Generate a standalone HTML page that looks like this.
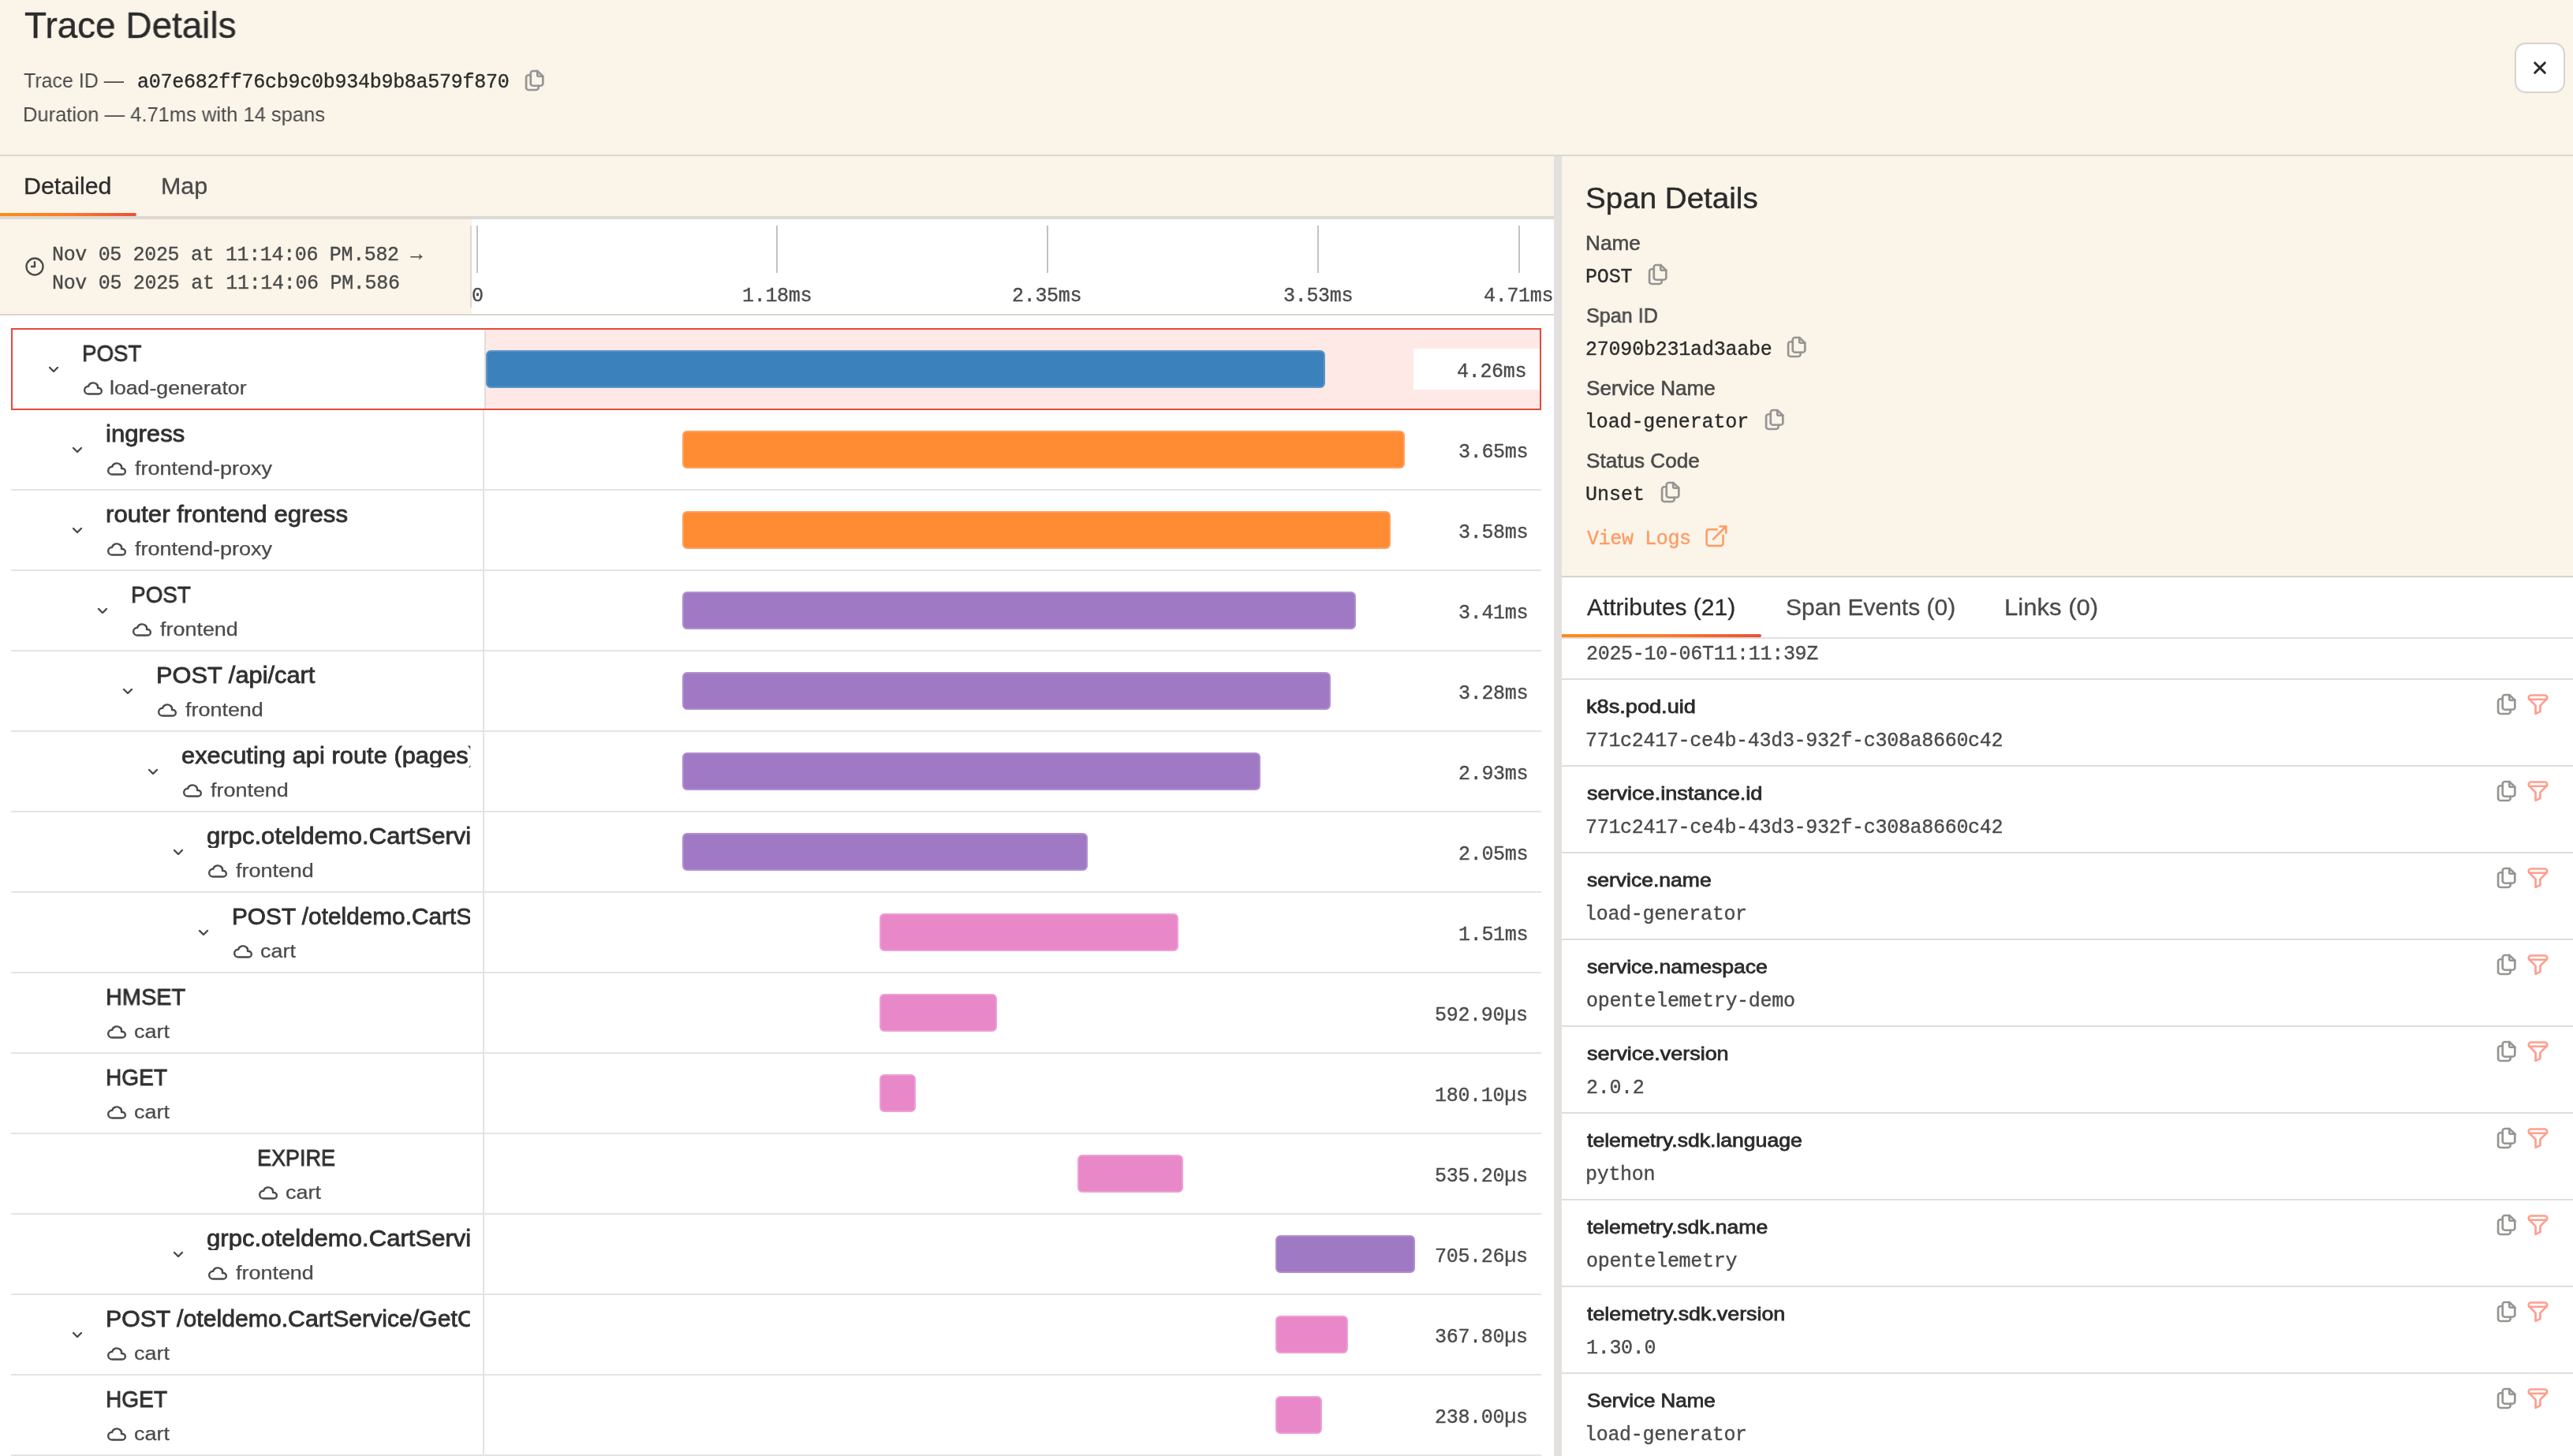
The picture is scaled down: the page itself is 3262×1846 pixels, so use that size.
<!DOCTYPE html>
<html><head><meta charset="utf-8"><title>Trace Details</title>
<style>
html,body{margin:0;padding:0;}
body{width:3262px;height:1846px;position:relative;overflow:hidden;background:#fff;font-family:"Liberation Sans",sans-serif;font-kerning:none;}
body>div,body>svg{position:absolute;}
.t{white-space:pre;transform-origin:0 0;will-change:transform;}
</style></head><body>
<div style="left:0px;top:0px;width:3262px;height:196px;background:#faf4e9;"></div>
<div style="left:0px;top:196px;width:3262px;height:2px;background:#dbd8d0;"></div>
<div style="left:0px;top:198px;width:1970px;height:76px;background:#faf4e9;"></div>
<div style="left:0px;top:274px;width:1970px;height:4px;background:#dcd9d2;"></div>
<div style="left:0;top:270px;width:172.5px;height:4px;background:linear-gradient(90deg,#ff8c1a 0%,#fb7d28 50%,#e8503a 100%);border-radius:0 2px 2px 0"></div>
<div style="left:0px;top:278px;width:598px;height:120px;background:#faf4e9;"></div>
<div style="left:598px;top:278px;width:1372px;height:120px;background:#fff;"></div>
<div style="left:596px;top:286px;width:2px;height:104px;background:#dcd8d0;"></div>
<div style="left:0px;top:398px;width:1970px;height:2px;background:#dad6cd;"></div>
<div style="left:0px;top:400px;width:1970px;height:1446px;background:#fff;"></div>
<div style="left:1970px;top:198px;width:10px;height:1648px;background:#e2e1df;"></div>
<div style="left:1980px;top:198px;width:1282px;height:532px;background:#faf4e9;"></div>
<div style="left:1980px;top:730px;width:1282px;height:2px;background:#d8d4cb;"></div>
<div style="left:1980px;top:732px;width:1282px;height:1114px;background:#fff;"></div>
<div class="t" style="left:31.17px;top:9.00px;font:400 46px/46px 'Liberation Sans', sans-serif;color:#2b2b2b;transform:scaleX(0.9975);-webkit-text-stroke:0.4px #2b2b2b;">Trace Details</div>
<div class="t" style="left:30.44px;top:88.60px;font:400 26px/26px 'Liberation Sans', sans-serif;color:#4a4a4a;transform:scaleX(0.9598);">Trace ID —</div>
<div class="t" style="left:173.61px;top:91.50px;font:400 25px/25px 'Liberation Mono', monospace;color:#2b2b2b;letter-spacing:-0.269px;-webkit-text-stroke:0.35px #2b2b2b;">a07e682ff76cb9c0b934b9b8a579f870</div>
<svg style="left:660.22px;top:85.53px" width="34" height="32" viewBox="0 0 24 24" preserveAspectRatio="none" fill="none" stroke="#969592" stroke-width="1.9" stroke-linecap="round" stroke-linejoin="round"><path d="M15 3v4a1 1 0 0 0 1 1h4"/><path d="M18 17h-7a2 2 0 0 1 -2 -2v-10a2 2 0 0 1 2 -2h4l5 5v7a2 2 0 0 1 -2 2z"/><path d="M16 17v2a2 2 0 0 1 -2 2h-7a2 2 0 0 1 -2 -2v-10a2 2 0 0 1 2 -2h2"/></svg>
<div class="t" style="left:28.91px;top:132.00px;font:400 26px/26px 'Liberation Sans', sans-serif;color:#4a4a4a;transform:scaleX(0.9816);">Duration — 4.71ms with 14 spans</div>
<div style="left:3188px;top:54px;width:64px;height:64px;box-sizing:border-box;background:#fff;border:2px solid #d6d3cc;border-radius:14px"></div>
<svg style="left:3208px;top:74px" width="24" height="24" viewBox="0 0 24 24" fill="none" stroke="#2b2b2b" stroke-width="3" stroke-linecap="round"><path d="M5.7 5.7l12.6 12.6M18.3 5.7l-12.6 12.6"/></svg>
<div class="t" style="left:29.57px;top:221.50px;font:400 28.6px/29px 'Liberation Sans', sans-serif;color:#2b2b2b;transform:scaleX(1.0619);-webkit-text-stroke:0.3px #2b2b2b;">Detailed</div>
<div class="t" style="left:204.36px;top:221.50px;font:400 28.6px/29px 'Liberation Sans', sans-serif;color:#4a4a4a;transform:scaleX(1.0651);-webkit-text-stroke:0.3px #4a4a4a;">Map</div>
<svg style="left:30.10px;top:323.90px" width="28" height="28" viewBox="0 0 24 24" fill="none" stroke="#4a4a4a" stroke-width="2" stroke-linecap="round" stroke-linejoin="round"><path d="M3 12a9 9 0 1 0 18 0a9 9 0 0 0 -18 0"/><path d="M12 12h-3.5"/><path d="M12 7v5"/></svg>
<div class="t" style="left:65.50px;top:311.00px;font:400 25px/25px 'Liberation Mono', monospace;color:#4a4a4a;letter-spacing:-0.343px;-webkit-text-stroke:0.35px #4a4a4a;">Nov 05 2025 at 11:14:06 PM.582 →</div>
<div class="t" style="left:65.50px;top:346.80px;font:400 25px/25px 'Liberation Mono', monospace;color:#4a4a4a;letter-spacing:-0.315px;-webkit-text-stroke:0.35px #4a4a4a;">Nov 05 2025 at 11:14:06 PM.586</div>
<div style="left:604px;top:286px;width:2px;height:60px;background:#c2c2c2;"></div>
<div style="left:984.3px;top:286px;width:2px;height:60px;background:#c2c2c2;"></div>
<div style="left:1327px;top:286px;width:2px;height:60px;background:#c2c2c2;"></div>
<div style="left:1670px;top:286px;width:2px;height:60px;background:#c2c2c2;"></div>
<div style="left:1925px;top:286px;width:2px;height:60px;background:#c2c2c2;"></div>
<div class="t" style="left:598.16px;top:363.00px;font:400 25px/25px 'Liberation Mono', monospace;color:#4a4a4a;-webkit-text-stroke:0.35px #4a4a4a;">0</div>
<div class="t" style="left:941.08px;top:363.00px;font:400 25px/25px 'Liberation Mono', monospace;color:#4a4a4a;letter-spacing:-0.302px;-webkit-text-stroke:0.35px #4a4a4a;">1.18ms</div>
<div class="t" style="left:1283.40px;top:363.00px;font:400 25px/25px 'Liberation Mono', monospace;color:#4a4a4a;letter-spacing:-0.302px;-webkit-text-stroke:0.35px #4a4a4a;">2.35ms</div>
<div class="t" style="left:1626.50px;top:363.00px;font:400 25px/25px 'Liberation Mono', monospace;color:#4a4a4a;letter-spacing:-0.302px;-webkit-text-stroke:0.35px #4a4a4a;">3.53ms</div>
<div class="t" style="left:1881.39px;top:363.00px;font:400 25px/25px 'Liberation Mono', monospace;color:#4a4a4a;letter-spacing:-0.302px;-webkit-text-stroke:0.35px #4a4a4a;">4.71ms</div>
<div style="left:616px;top:418px;width:1336px;height:100px;background:#fee9e7;"></div>
<div style="left:614px;top:418px;width:2px;height:100px;background:#e0dedd;"></div>
<div style="left:14px;top:416px;width:1940px;height:104px;box-sizing:border-box;border:2px solid #e5493b"></div>
<div style="left:1792px;top:442px;width:160px;height:52px;background:#fff;"></div>
<div class="t" style="left:104.00px;top:432.50px;font:400 29.5px/30px 'Liberation Sans', sans-serif;color:#303030;transform:scaleX(0.9395);-webkit-text-stroke:0.8px #303030;">POST</div>
<svg style="left:105.12px;top:479.77px" width="26" height="26" viewBox="0 0 24 24" fill="none" stroke="#4a4a4a" stroke-width="2.2" stroke-linecap="round" stroke-linejoin="round"><path d="M6.657 18c-2.572 0 -4.657 -2.007 -4.657 -4.483c0 -2.475 2.085 -4.482 4.657 -4.482c.393 -1.762 1.794 -3.2 3.675 -3.773c1.88 -.572 3.956 -.193 5.444 1c1.488 1.19 2.162 3.007 1.77 4.769h.99c1.913 0 3.464 1.56 3.464 3.486c0 1.927 -1.551 3.487 -3.465 3.487h-11.878"/></svg>
<div class="t" style="left:139.34px;top:480.00px;font:400 23.5px/24px 'Liberation Sans', sans-serif;color:#4a4a4a;transform:scaleX(1.1354);-webkit-text-stroke:0.25px #4a4a4a;">load-generator</div>
<svg style="left:60.10px;top:462.50px" width="16" height="11" viewBox="0 0 16 11" fill="none" stroke="#4a4a4a" stroke-width="2.4" stroke-linecap="round" stroke-linejoin="round"><path d="M3 3l5 5l5 -5"/></svg>
<div style="left:616px;top:444px;width:1064.0px;height:48px;box-sizing:border-box;background:#3b82bd;border:2px solid #5a96c8;border-radius:6px"></div>
<div class="t" style="left:1846.89px;top:458.80px;font:400 25px/25px 'Liberation Mono', monospace;color:#4a4a4a;letter-spacing:-0.302px;-webkit-text-stroke:0.35px #4a4a4a;">4.26ms</div>
<div style="left:14px;top:620px;width:1940px;height:2px;background:#e4e4e4;"></div>
<div style="left:612px;top:520px;width:2px;height:102px;background:#e2e2e2;"></div>
<div class="t" style="left:134.04px;top:534.50px;font:400 29.5px/30px 'Liberation Sans', sans-serif;color:#303030;transform:scaleX(1.0543);-webkit-text-stroke:0.8px #303030;">ingress</div>
<svg style="left:135.12px;top:581.77px" width="26" height="26" viewBox="0 0 24 24" fill="none" stroke="#4a4a4a" stroke-width="2.2" stroke-linecap="round" stroke-linejoin="round"><path d="M6.657 18c-2.572 0 -4.657 -2.007 -4.657 -4.483c0 -2.475 2.085 -4.482 4.657 -4.482c.393 -1.762 1.794 -3.2 3.675 -3.773c1.88 -.572 3.956 -.193 5.444 1c1.488 1.19 2.162 3.007 1.77 4.769h.99c1.913 0 3.464 1.56 3.464 3.486c0 1.927 -1.551 3.487 -3.465 3.487h-11.878"/></svg>
<div class="t" style="left:170.76px;top:582.00px;font:400 23.5px/24px 'Liberation Sans', sans-serif;color:#4a4a4a;transform:scaleX(1.1480);-webkit-text-stroke:0.25px #4a4a4a;">frontend-proxy</div>
<svg style="left:90.10px;top:564.50px" width="16" height="11" viewBox="0 0 16 11" fill="none" stroke="#4a4a4a" stroke-width="2.4" stroke-linecap="round" stroke-linejoin="round"><path d="M3 3l5 5l5 -5"/></svg>
<div style="left:865px;top:546px;width:916.0px;height:48px;box-sizing:border-box;background:#ff8b33;border:2px solid #ffa05c;border-radius:6px"></div>
<div class="t" style="left:1848.89px;top:560.80px;font:400 25px/25px 'Liberation Mono', monospace;color:#4a4a4a;letter-spacing:-0.302px;-webkit-text-stroke:0.35px #4a4a4a;">3.65ms</div>
<div style="left:14px;top:722px;width:1940px;height:2px;background:#e4e4e4;"></div>
<div style="left:612px;top:622px;width:2px;height:102px;background:#e2e2e2;"></div>
<div class="t" style="left:133.85px;top:636.50px;font:400 29.5px/30px 'Liberation Sans', sans-serif;color:#303030;transform:scaleX(1.0579);-webkit-text-stroke:0.8px #303030;">router frontend egress</div>
<svg style="left:135.12px;top:683.77px" width="26" height="26" viewBox="0 0 24 24" fill="none" stroke="#4a4a4a" stroke-width="2.2" stroke-linecap="round" stroke-linejoin="round"><path d="M6.657 18c-2.572 0 -4.657 -2.007 -4.657 -4.483c0 -2.475 2.085 -4.482 4.657 -4.482c.393 -1.762 1.794 -3.2 3.675 -3.773c1.88 -.572 3.956 -.193 5.444 1c1.488 1.19 2.162 3.007 1.77 4.769h.99c1.913 0 3.464 1.56 3.464 3.486c0 1.927 -1.551 3.487 -3.465 3.487h-11.878"/></svg>
<div class="t" style="left:170.76px;top:684.00px;font:400 23.5px/24px 'Liberation Sans', sans-serif;color:#4a4a4a;transform:scaleX(1.1480);-webkit-text-stroke:0.25px #4a4a4a;">frontend-proxy</div>
<svg style="left:90.10px;top:666.50px" width="16" height="11" viewBox="0 0 16 11" fill="none" stroke="#4a4a4a" stroke-width="2.4" stroke-linecap="round" stroke-linejoin="round"><path d="M3 3l5 5l5 -5"/></svg>
<div style="left:865px;top:648px;width:897.5px;height:48px;box-sizing:border-box;background:#ff8b33;border:2px solid #ffa05c;border-radius:6px"></div>
<div class="t" style="left:1848.89px;top:662.80px;font:400 25px/25px 'Liberation Mono', monospace;color:#4a4a4a;letter-spacing:-0.302px;-webkit-text-stroke:0.35px #4a4a4a;">3.58ms</div>
<div style="left:14px;top:824px;width:1940px;height:2px;background:#e4e4e4;"></div>
<div style="left:612px;top:724px;width:2px;height:102px;background:#e2e2e2;"></div>
<div class="t" style="left:165.99px;top:738.50px;font:400 29.5px/30px 'Liberation Sans', sans-serif;color:#303030;transform:scaleX(0.9459);-webkit-text-stroke:0.8px #303030;">POST</div>
<svg style="left:167.12px;top:785.77px" width="26" height="26" viewBox="0 0 24 24" fill="none" stroke="#4a4a4a" stroke-width="2.2" stroke-linecap="round" stroke-linejoin="round"><path d="M6.657 18c-2.572 0 -4.657 -2.007 -4.657 -4.483c0 -2.475 2.085 -4.482 4.657 -4.482c.393 -1.762 1.794 -3.2 3.675 -3.773c1.88 -.572 3.956 -.193 5.444 1c1.488 1.19 2.162 3.007 1.77 4.769h.99c1.913 0 3.464 1.56 3.464 3.486c0 1.927 -1.551 3.487 -3.465 3.487h-11.878"/></svg>
<div class="t" style="left:202.76px;top:786.00px;font:400 23.5px/24px 'Liberation Sans', sans-serif;color:#4a4a4a;transform:scaleX(1.1461);-webkit-text-stroke:0.25px #4a4a4a;">frontend</div>
<svg style="left:122.10px;top:768.50px" width="16" height="11" viewBox="0 0 16 11" fill="none" stroke="#4a4a4a" stroke-width="2.4" stroke-linecap="round" stroke-linejoin="round"><path d="M3 3l5 5l5 -5"/></svg>
<div style="left:865px;top:750px;width:853.8px;height:48px;box-sizing:border-box;background:#a079c4;border:2px solid #b190d0;border-radius:6px"></div>
<div class="t" style="left:1848.89px;top:764.80px;font:400 25px/25px 'Liberation Mono', monospace;color:#4a4a4a;letter-spacing:-0.302px;-webkit-text-stroke:0.35px #4a4a4a;">3.41ms</div>
<div style="left:14px;top:926px;width:1940px;height:2px;background:#e4e4e4;"></div>
<div style="left:612px;top:826px;width:2px;height:102px;background:#e2e2e2;"></div>
<div class="t" style="left:197.79px;top:840.50px;font:400 29.5px/30px 'Liberation Sans', sans-serif;color:#303030;transform:scaleX(1.0438);-webkit-text-stroke:0.8px #303030;">POST /api/cart</div>
<svg style="left:199.12px;top:887.77px" width="26" height="26" viewBox="0 0 24 24" fill="none" stroke="#4a4a4a" stroke-width="2.2" stroke-linecap="round" stroke-linejoin="round"><path d="M6.657 18c-2.572 0 -4.657 -2.007 -4.657 -4.483c0 -2.475 2.085 -4.482 4.657 -4.482c.393 -1.762 1.794 -3.2 3.675 -3.773c1.88 -.572 3.956 -.193 5.444 1c1.488 1.19 2.162 3.007 1.77 4.769h.99c1.913 0 3.464 1.56 3.464 3.486c0 1.927 -1.551 3.487 -3.465 3.487h-11.878"/></svg>
<div class="t" style="left:234.76px;top:888.00px;font:400 23.5px/24px 'Liberation Sans', sans-serif;color:#4a4a4a;transform:scaleX(1.1461);-webkit-text-stroke:0.25px #4a4a4a;">frontend</div>
<svg style="left:154.10px;top:870.50px" width="16" height="11" viewBox="0 0 16 11" fill="none" stroke="#4a4a4a" stroke-width="2.4" stroke-linecap="round" stroke-linejoin="round"><path d="M3 3l5 5l5 -5"/></svg>
<div style="left:865px;top:852px;width:822.0px;height:48px;box-sizing:border-box;background:#a079c4;border:2px solid #b190d0;border-radius:6px"></div>
<div class="t" style="left:1848.89px;top:866.80px;font:400 25px/25px 'Liberation Mono', monospace;color:#4a4a4a;letter-spacing:-0.302px;-webkit-text-stroke:0.35px #4a4a4a;">3.28ms</div>
<div style="left:14px;top:1028px;width:1940px;height:2px;background:#e4e4e4;"></div>
<div style="left:612px;top:928px;width:2px;height:102px;background:#e2e2e2;"></div>
<div class="t" style="left:230.01px;top:942.50px;font:400 29.5px/30px 'Liberation Sans', sans-serif;color:#303030;transform:scaleX(1.0463);-webkit-text-stroke:0.8px #303030;width:349.59px;overflow:hidden;">executing api route (pages) /api/cart</div>
<svg style="left:231.12px;top:989.77px" width="26" height="26" viewBox="0 0 24 24" fill="none" stroke="#4a4a4a" stroke-width="2.2" stroke-linecap="round" stroke-linejoin="round"><path d="M6.657 18c-2.572 0 -4.657 -2.007 -4.657 -4.483c0 -2.475 2.085 -4.482 4.657 -4.482c.393 -1.762 1.794 -3.2 3.675 -3.773c1.88 -.572 3.956 -.193 5.444 1c1.488 1.19 2.162 3.007 1.77 4.769h.99c1.913 0 3.464 1.56 3.464 3.486c0 1.927 -1.551 3.487 -3.465 3.487h-11.878"/></svg>
<div class="t" style="left:266.76px;top:990.00px;font:400 23.5px/24px 'Liberation Sans', sans-serif;color:#4a4a4a;transform:scaleX(1.1461);-webkit-text-stroke:0.25px #4a4a4a;">frontend</div>
<svg style="left:186.10px;top:972.50px" width="16" height="11" viewBox="0 0 16 11" fill="none" stroke="#4a4a4a" stroke-width="2.4" stroke-linecap="round" stroke-linejoin="round"><path d="M3 3l5 5l5 -5"/></svg>
<div style="left:865px;top:954px;width:732.8px;height:48px;box-sizing:border-box;background:#a079c4;border:2px solid #b190d0;border-radius:6px"></div>
<div class="t" style="left:1848.89px;top:968.80px;font:400 25px/25px 'Liberation Mono', monospace;color:#4a4a4a;letter-spacing:-0.302px;-webkit-text-stroke:0.35px #4a4a4a;">2.93ms</div>
<div style="left:14px;top:1130px;width:1940px;height:2px;background:#e4e4e4;"></div>
<div style="left:612px;top:1030px;width:2px;height:102px;background:#e2e2e2;"></div>
<div class="t" style="left:262.02px;top:1044.50px;font:400 29.5px/30px 'Liberation Sans', sans-serif;color:#303030;transform:scaleX(1.0540);-webkit-text-stroke:0.8px #303030;width:316.68px;overflow:hidden;">grpc.oteldemo.CartService/AddItem</div>
<svg style="left:263.12px;top:1091.77px" width="26" height="26" viewBox="0 0 24 24" fill="none" stroke="#4a4a4a" stroke-width="2.2" stroke-linecap="round" stroke-linejoin="round"><path d="M6.657 18c-2.572 0 -4.657 -2.007 -4.657 -4.483c0 -2.475 2.085 -4.482 4.657 -4.482c.393 -1.762 1.794 -3.2 3.675 -3.773c1.88 -.572 3.956 -.193 5.444 1c1.488 1.19 2.162 3.007 1.77 4.769h.99c1.913 0 3.464 1.56 3.464 3.486c0 1.927 -1.551 3.487 -3.465 3.487h-11.878"/></svg>
<div class="t" style="left:298.76px;top:1092.00px;font:400 23.5px/24px 'Liberation Sans', sans-serif;color:#4a4a4a;transform:scaleX(1.1461);-webkit-text-stroke:0.25px #4a4a4a;">frontend</div>
<svg style="left:218.10px;top:1074.50px" width="16" height="11" viewBox="0 0 16 11" fill="none" stroke="#4a4a4a" stroke-width="2.4" stroke-linecap="round" stroke-linejoin="round"><path d="M3 3l5 5l5 -5"/></svg>
<div style="left:865px;top:1056px;width:513.8px;height:48px;box-sizing:border-box;background:#a079c4;border:2px solid #b190d0;border-radius:6px"></div>
<div class="t" style="left:1848.89px;top:1070.80px;font:400 25px/25px 'Liberation Mono', monospace;color:#4a4a4a;letter-spacing:-0.302px;-webkit-text-stroke:0.35px #4a4a4a;">2.05ms</div>
<div style="left:14px;top:1232px;width:1940px;height:2px;background:#e4e4e4;"></div>
<div style="left:612px;top:1132px;width:2px;height:102px;background:#e2e2e2;"></div>
<div class="t" style="left:293.86px;top:1146.50px;font:400 29.5px/30px 'Liberation Sans', sans-serif;color:#303030;transform:scaleX(1.0098);-webkit-text-stroke:0.8px #303030;width:299.01px;overflow:hidden;">POST /oteldemo.CartService/AddItem</div>
<svg style="left:295.12px;top:1193.77px" width="26" height="26" viewBox="0 0 24 24" fill="none" stroke="#4a4a4a" stroke-width="2.2" stroke-linecap="round" stroke-linejoin="round"><path d="M6.657 18c-2.572 0 -4.657 -2.007 -4.657 -4.483c0 -2.475 2.085 -4.482 4.657 -4.482c.393 -1.762 1.794 -3.2 3.675 -3.773c1.88 -.572 3.956 -.193 5.444 1c1.488 1.19 2.162 3.007 1.77 4.769h.99c1.913 0 3.464 1.56 3.464 3.486c0 1.927 -1.551 3.487 -3.465 3.487h-11.878"/></svg>
<div class="t" style="left:330.00px;top:1194.00px;font:400 23.5px/24px 'Liberation Sans', sans-serif;color:#4a4a4a;transform:scaleX(1.1450);-webkit-text-stroke:0.25px #4a4a4a;">cart</div>
<svg style="left:250.10px;top:1176.50px" width="16" height="11" viewBox="0 0 16 11" fill="none" stroke="#4a4a4a" stroke-width="2.4" stroke-linecap="round" stroke-linejoin="round"><path d="M3 3l5 5l5 -5"/></svg>
<div style="left:1115px;top:1158px;width:378.8px;height:48px;box-sizing:border-box;background:#e888c8;border:2px solid #ee9fd4;border-radius:6px"></div>
<div class="t" style="left:1848.89px;top:1172.80px;font:400 25px/25px 'Liberation Mono', monospace;color:#4a4a4a;letter-spacing:-0.302px;-webkit-text-stroke:0.35px #4a4a4a;">1.51ms</div>
<div style="left:14px;top:1334px;width:1940px;height:2px;background:#e4e4e4;"></div>
<div style="left:612px;top:1234px;width:2px;height:102px;background:#e2e2e2;"></div>
<div class="t" style="left:133.92px;top:1248.50px;font:400 29.5px/30px 'Liberation Sans', sans-serif;color:#303030;transform:scaleX(0.9797);-webkit-text-stroke:0.8px #303030;">HMSET</div>
<svg style="left:135.12px;top:1295.77px" width="26" height="26" viewBox="0 0 24 24" fill="none" stroke="#4a4a4a" stroke-width="2.2" stroke-linecap="round" stroke-linejoin="round"><path d="M6.657 18c-2.572 0 -4.657 -2.007 -4.657 -4.483c0 -2.475 2.085 -4.482 4.657 -4.482c.393 -1.762 1.794 -3.2 3.675 -3.773c1.88 -.572 3.956 -.193 5.444 1c1.488 1.19 2.162 3.007 1.77 4.769h.99c1.913 0 3.464 1.56 3.464 3.486c0 1.927 -1.551 3.487 -3.465 3.487h-11.878"/></svg>
<div class="t" style="left:170.00px;top:1296.00px;font:400 23.5px/24px 'Liberation Sans', sans-serif;color:#4a4a4a;transform:scaleX(1.1450);-webkit-text-stroke:0.25px #4a4a4a;">cart</div>
<div style="left:1115px;top:1260px;width:148.8px;height:48px;box-sizing:border-box;background:#e888c8;border:2px solid #ee9fd4;border-radius:6px"></div>
<div class="t" style="left:1819.49px;top:1274.80px;font:400 25px/25px 'Liberation Mono', monospace;color:#4a4a4a;letter-spacing:-0.302px;-webkit-text-stroke:0.35px #4a4a4a;">592.90µs</div>
<div style="left:14px;top:1436px;width:1940px;height:2px;background:#e4e4e4;"></div>
<div style="left:612px;top:1336px;width:2px;height:102px;background:#e2e2e2;"></div>
<div class="t" style="left:133.98px;top:1350.50px;font:400 29.5px/30px 'Liberation Sans', sans-serif;color:#303030;transform:scaleX(0.9517);-webkit-text-stroke:0.8px #303030;">HGET</div>
<svg style="left:135.12px;top:1397.77px" width="26" height="26" viewBox="0 0 24 24" fill="none" stroke="#4a4a4a" stroke-width="2.2" stroke-linecap="round" stroke-linejoin="round"><path d="M6.657 18c-2.572 0 -4.657 -2.007 -4.657 -4.483c0 -2.475 2.085 -4.482 4.657 -4.482c.393 -1.762 1.794 -3.2 3.675 -3.773c1.88 -.572 3.956 -.193 5.444 1c1.488 1.19 2.162 3.007 1.77 4.769h.99c1.913 0 3.464 1.56 3.464 3.486c0 1.927 -1.551 3.487 -3.465 3.487h-11.878"/></svg>
<div class="t" style="left:170.00px;top:1398.00px;font:400 23.5px/24px 'Liberation Sans', sans-serif;color:#4a4a4a;transform:scaleX(1.1450);-webkit-text-stroke:0.25px #4a4a4a;">cart</div>
<div style="left:1115px;top:1362px;width:46.0px;height:48px;box-sizing:border-box;background:#e888c8;border:2px solid #ee9fd4;border-radius:6px"></div>
<div class="t" style="left:1819.49px;top:1376.80px;font:400 25px/25px 'Liberation Mono', monospace;color:#4a4a4a;letter-spacing:-0.302px;-webkit-text-stroke:0.35px #4a4a4a;">180.10µs</div>
<div style="left:14px;top:1538px;width:1940px;height:2px;background:#e4e4e4;"></div>
<div style="left:612px;top:1438px;width:2px;height:102px;background:#e2e2e2;"></div>
<div class="t" style="left:326.05px;top:1452.50px;font:400 29.5px/30px 'Liberation Sans', sans-serif;color:#303030;transform:scaleX(0.9153);-webkit-text-stroke:0.8px #303030;">EXPIRE</div>
<svg style="left:327.12px;top:1499.77px" width="26" height="26" viewBox="0 0 24 24" fill="none" stroke="#4a4a4a" stroke-width="2.2" stroke-linecap="round" stroke-linejoin="round"><path d="M6.657 18c-2.572 0 -4.657 -2.007 -4.657 -4.483c0 -2.475 2.085 -4.482 4.657 -4.482c.393 -1.762 1.794 -3.2 3.675 -3.773c1.88 -.572 3.956 -.193 5.444 1c1.488 1.19 2.162 3.007 1.77 4.769h.99c1.913 0 3.464 1.56 3.464 3.486c0 1.927 -1.551 3.487 -3.465 3.487h-11.878"/></svg>
<div class="t" style="left:362.00px;top:1500.00px;font:400 23.5px/24px 'Liberation Sans', sans-serif;color:#4a4a4a;transform:scaleX(1.1450);-webkit-text-stroke:0.25px #4a4a4a;">cart</div>
<div style="left:1366px;top:1464px;width:133.6px;height:48px;box-sizing:border-box;background:#e888c8;border:2px solid #ee9fd4;border-radius:6px"></div>
<div class="t" style="left:1819.49px;top:1478.80px;font:400 25px/25px 'Liberation Mono', monospace;color:#4a4a4a;letter-spacing:-0.302px;-webkit-text-stroke:0.35px #4a4a4a;">535.20µs</div>
<div style="left:14px;top:1640px;width:1940px;height:2px;background:#e4e4e4;"></div>
<div style="left:612px;top:1540px;width:2px;height:102px;background:#e2e2e2;"></div>
<div class="t" style="left:262.02px;top:1554.50px;font:400 29.5px/30px 'Liberation Sans', sans-serif;color:#303030;transform:scaleX(1.0540);-webkit-text-stroke:0.8px #303030;width:316.68px;overflow:hidden;">grpc.oteldemo.CartService/GetCart</div>
<svg style="left:263.12px;top:1601.77px" width="26" height="26" viewBox="0 0 24 24" fill="none" stroke="#4a4a4a" stroke-width="2.2" stroke-linecap="round" stroke-linejoin="round"><path d="M6.657 18c-2.572 0 -4.657 -2.007 -4.657 -4.483c0 -2.475 2.085 -4.482 4.657 -4.482c.393 -1.762 1.794 -3.2 3.675 -3.773c1.88 -.572 3.956 -.193 5.444 1c1.488 1.19 2.162 3.007 1.77 4.769h.99c1.913 0 3.464 1.56 3.464 3.486c0 1.927 -1.551 3.487 -3.465 3.487h-11.878"/></svg>
<div class="t" style="left:298.76px;top:1602.00px;font:400 23.5px/24px 'Liberation Sans', sans-serif;color:#4a4a4a;transform:scaleX(1.1461);-webkit-text-stroke:0.25px #4a4a4a;">frontend</div>
<svg style="left:218.10px;top:1584.50px" width="16" height="11" viewBox="0 0 16 11" fill="none" stroke="#4a4a4a" stroke-width="2.4" stroke-linecap="round" stroke-linejoin="round"><path d="M3 3l5 5l5 -5"/></svg>
<div style="left:1617px;top:1566px;width:176.5px;height:48px;box-sizing:border-box;background:#a079c4;border:2px solid #b190d0;border-radius:6px"></div>
<div class="t" style="left:1819.49px;top:1580.80px;font:400 25px/25px 'Liberation Mono', monospace;color:#4a4a4a;letter-spacing:-0.302px;-webkit-text-stroke:0.35px #4a4a4a;">705.26µs</div>
<div style="left:14px;top:1742px;width:1940px;height:2px;background:#e4e4e4;"></div>
<div style="left:612px;top:1642px;width:2px;height:102px;background:#e2e2e2;"></div>
<div class="t" style="left:133.83px;top:1656.50px;font:400 29.5px/30px 'Liberation Sans', sans-serif;color:#303030;transform:scaleX(1.0238);-webkit-text-stroke:0.8px #303030;width:451.23px;overflow:hidden;">POST /oteldemo.CartService/GetCart</div>
<svg style="left:135.12px;top:1703.77px" width="26" height="26" viewBox="0 0 24 24" fill="none" stroke="#4a4a4a" stroke-width="2.2" stroke-linecap="round" stroke-linejoin="round"><path d="M6.657 18c-2.572 0 -4.657 -2.007 -4.657 -4.483c0 -2.475 2.085 -4.482 4.657 -4.482c.393 -1.762 1.794 -3.2 3.675 -3.773c1.88 -.572 3.956 -.193 5.444 1c1.488 1.19 2.162 3.007 1.77 4.769h.99c1.913 0 3.464 1.56 3.464 3.486c0 1.927 -1.551 3.487 -3.465 3.487h-11.878"/></svg>
<div class="t" style="left:170.00px;top:1704.00px;font:400 23.5px/24px 'Liberation Sans', sans-serif;color:#4a4a4a;transform:scaleX(1.1450);-webkit-text-stroke:0.25px #4a4a4a;">cart</div>
<svg style="left:90.10px;top:1686.50px" width="16" height="11" viewBox="0 0 16 11" fill="none" stroke="#4a4a4a" stroke-width="2.4" stroke-linecap="round" stroke-linejoin="round"><path d="M3 3l5 5l5 -5"/></svg>
<div style="left:1617px;top:1668px;width:91.8px;height:48px;box-sizing:border-box;background:#e888c8;border:2px solid #ee9fd4;border-radius:6px"></div>
<div class="t" style="left:1819.49px;top:1682.80px;font:400 25px/25px 'Liberation Mono', monospace;color:#4a4a4a;letter-spacing:-0.302px;-webkit-text-stroke:0.35px #4a4a4a;">367.80µs</div>
<div style="left:14px;top:1844px;width:1940px;height:2px;background:#e4e4e4;"></div>
<div style="left:612px;top:1744px;width:2px;height:100px;background:#e2e2e2;"></div>
<div class="t" style="left:133.98px;top:1758.50px;font:400 29.5px/30px 'Liberation Sans', sans-serif;color:#303030;transform:scaleX(0.9517);-webkit-text-stroke:0.8px #303030;">HGET</div>
<svg style="left:135.12px;top:1805.77px" width="26" height="26" viewBox="0 0 24 24" fill="none" stroke="#4a4a4a" stroke-width="2.2" stroke-linecap="round" stroke-linejoin="round"><path d="M6.657 18c-2.572 0 -4.657 -2.007 -4.657 -4.483c0 -2.475 2.085 -4.482 4.657 -4.482c.393 -1.762 1.794 -3.2 3.675 -3.773c1.88 -.572 3.956 -.193 5.444 1c1.488 1.19 2.162 3.007 1.77 4.769h.99c1.913 0 3.464 1.56 3.464 3.486c0 1.927 -1.551 3.487 -3.465 3.487h-11.878"/></svg>
<div class="t" style="left:170.00px;top:1806.00px;font:400 23.5px/24px 'Liberation Sans', sans-serif;color:#4a4a4a;transform:scaleX(1.1450);-webkit-text-stroke:0.25px #4a4a4a;">cart</div>
<div style="left:1617px;top:1770px;width:58.6px;height:48px;box-sizing:border-box;background:#e888c8;border:2px solid #ee9fd4;border-radius:6px"></div>
<div class="t" style="left:1819.49px;top:1784.80px;font:400 25px/25px 'Liberation Mono', monospace;color:#4a4a4a;letter-spacing:-0.302px;-webkit-text-stroke:0.35px #4a4a4a;">238.00µs</div>
<div class="t" style="left:2010.45px;top:231.50px;font:400 37.5px/38px 'Liberation Sans', sans-serif;color:#2b2b2b;transform:scaleX(1.0287);-webkit-text-stroke:0.4px #2b2b2b;">Span Details</div>
<div class="t" style="left:2010.13px;top:294.50px;font:400 26px/26px 'Liberation Sans', sans-serif;color:#4a4a4a;transform:scaleX(1.0058);-webkit-text-stroke:0.55px #4a4a4a;">Name</div>
<div class="t" style="left:2010.20px;top:339.00px;font:400 25px/25px 'Liberation Mono', monospace;color:#2b2b2b;letter-spacing:-0.147px;-webkit-text-stroke:0.35px #2b2b2b;">POST</div>
<svg style="left:2084.32px;top:331.93px" width="34" height="32" viewBox="0 0 24 24" preserveAspectRatio="none" fill="none" stroke="#969592" stroke-width="1.9" stroke-linecap="round" stroke-linejoin="round"><path d="M15 3v4a1 1 0 0 0 1 1h4"/><path d="M18 17h-7a2 2 0 0 1 -2 -2v-10a2 2 0 0 1 2 -2h4l5 5v7a2 2 0 0 1 -2 2z"/><path d="M16 17v2a2 2 0 0 1 -2 2h-7a2 2 0 0 1 -2 -2v-10a2 2 0 0 1 2 -2h2"/></svg>
<div class="t" style="left:2011.12px;top:386.50px;font:400 26px/26px 'Liberation Sans', sans-serif;color:#4a4a4a;transform:scaleX(0.9667);-webkit-text-stroke:0.55px #4a4a4a;">Span ID</div>
<div class="t" style="left:2010.42px;top:431.00px;font:400 25px/25px 'Liberation Mono', monospace;color:#2b2b2b;letter-spacing:-0.212px;-webkit-text-stroke:0.35px #2b2b2b;">27090b231ad3aabe</div>
<svg style="left:2260.12px;top:423.93px" width="34" height="32" viewBox="0 0 24 24" preserveAspectRatio="none" fill="none" stroke="#969592" stroke-width="1.9" stroke-linecap="round" stroke-linejoin="round"><path d="M15 3v4a1 1 0 0 0 1 1h4"/><path d="M18 17h-7a2 2 0 0 1 -2 -2v-10a2 2 0 0 1 2 -2h4l5 5v7a2 2 0 0 1 -2 2z"/><path d="M16 17v2a2 2 0 0 1 -2 2h-7a2 2 0 0 1 -2 -2v-10a2 2 0 0 1 2 -2h2"/></svg>
<div class="t" style="left:2011.09px;top:478.50px;font:400 26px/26px 'Liberation Sans', sans-serif;color:#4a4a4a;transform:scaleX(1.0032);-webkit-text-stroke:0.55px #4a4a4a;">Service Name</div>
<div class="t" style="left:2008.92px;top:523.00px;font:400 25px/25px 'Liberation Mono', monospace;color:#2b2b2b;letter-spacing:-0.145px;-webkit-text-stroke:0.35px #2b2b2b;">load-generator</div>
<svg style="left:2232.02px;top:515.93px" width="34" height="32" viewBox="0 0 24 24" preserveAspectRatio="none" fill="none" stroke="#969592" stroke-width="1.9" stroke-linecap="round" stroke-linejoin="round"><path d="M15 3v4a1 1 0 0 0 1 1h4"/><path d="M18 17h-7a2 2 0 0 1 -2 -2v-10a2 2 0 0 1 2 -2h4l5 5v7a2 2 0 0 1 -2 2z"/><path d="M16 17v2a2 2 0 0 1 -2 2h-7a2 2 0 0 1 -2 -2v-10a2 2 0 0 1 2 -2h2"/></svg>
<div class="t" style="left:2011.09px;top:570.50px;font:400 26px/26px 'Liberation Sans', sans-serif;color:#4a4a4a;transform:scaleX(1.0049);-webkit-text-stroke:0.55px #4a4a4a;">Status Code</div>
<div class="t" style="left:2010.44px;top:615.00px;font:400 25px/25px 'Liberation Mono', monospace;color:#2b2b2b;letter-spacing:-0.010px;-webkit-text-stroke:0.35px #2b2b2b;">Unset</div>
<svg style="left:2100.32px;top:607.93px" width="34" height="32" viewBox="0 0 24 24" preserveAspectRatio="none" fill="none" stroke="#969592" stroke-width="1.9" stroke-linecap="round" stroke-linejoin="round"><path d="M15 3v4a1 1 0 0 0 1 1h4"/><path d="M18 17h-7a2 2 0 0 1 -2 -2v-10a2 2 0 0 1 2 -2h4l5 5v7a2 2 0 0 1 -2 2z"/><path d="M16 17v2a2 2 0 0 1 -2 2h-7a2 2 0 0 1 -2 -2v-10a2 2 0 0 1 2 -2h2"/></svg>
<div class="t" style="left:2012.25px;top:671.00px;font:400 25px/25px 'Liberation Mono', monospace;color:#ff9a62;letter-spacing:-0.373px;-webkit-text-stroke:0.35px #ff9a62;">View Logs</div>
<svg style="left:2160.00px;top:664.00px" width="32" height="32" viewBox="0 0 32 32" fill="none" stroke="#ff9a62" stroke-width="2.5" stroke-linecap="round" stroke-linejoin="round"><path d="M16.5 7.2H6.6a3 3 0 0 0 -3 3V25.1a3 3 0 0 0 3 3H21.5a3 3 0 0 0 3 -3V14.8"/><path d="M12 19.7L28.2 3.5"/><path d="M20.4 3.5H28.2V11.8"/></svg>
<div class="t" style="left:2012.09px;top:754.50px;font:400 29.5px/30px 'Liberation Sans', sans-serif;color:#2b2b2b;transform:scaleX(1.0153);-webkit-text-stroke:0.3px #2b2b2b;">Attributes (21)</div>
<div class="t" style="left:2263.79px;top:754.50px;font:400 29.5px/30px 'Liberation Sans', sans-serif;color:#4a4a4a;transform:scaleX(1.0175);-webkit-text-stroke:0.3px #4a4a4a;">Span Events (0)</div>
<div class="t" style="left:2541.41px;top:754.50px;font:400 29.5px/30px 'Liberation Sans', sans-serif;color:#4a4a4a;transform:scaleX(1.0534);-webkit-text-stroke:0.3px #4a4a4a;">Links (0)</div>
<div style="left:1980px;top:808px;width:1282px;height:2px;background:#e0e0e0;"></div>
<div style="left:1980px;top:804px;width:252.5px;height:4px;background:linear-gradient(90deg,#ff8c1a 0%,#fb7d28 50%,#e8503a 100%);border-radius:0 2px 2px 0"></div>
<div class="t" style="left:2010.62px;top:817.00px;font:400 25px/25px 'Liberation Mono', monospace;color:#4a4a4a;letter-spacing:-0.302px;-webkit-text-stroke:0.35px #4a4a4a;">2025-10-06T11:11:39Z</div>
<div style="left:1980px;top:860px;width:1282px;height:2px;background:#dedede;"></div>
<div class="t" style="left:2011.02px;top:883.00px;font:400 24.3px/25px 'Liberation Sans', sans-serif;color:#2b2b2b;transform:scaleX(1.1174);-webkit-text-stroke:0.8px #2b2b2b;">k8s.pod.uid</div>
<svg style="left:3159.92px;top:877.13px" width="34" height="32" viewBox="0 0 24 24" preserveAspectRatio="none" fill="none" stroke="#969592" stroke-width="1.9" stroke-linecap="round" stroke-linejoin="round"><path d="M15 3v4a1 1 0 0 0 1 1h4"/><path d="M18 17h-7a2 2 0 0 1 -2 -2v-10a2 2 0 0 1 2 -2h4l5 5v7a2 2 0 0 1 -2 2z"/><path d="M16 17v2a2 2 0 0 1 -2 2h-7a2 2 0 0 1 -2 -2v-10a2 2 0 0 1 2 -2h2"/></svg>
<svg style="left:3199.92px;top:875.66px" width="35" height="33" viewBox="0 0 24 24" preserveAspectRatio="none" fill="none" stroke="#ff9e8e" stroke-width="1.85" stroke-linecap="round" stroke-linejoin="round"><path d="M4 6a2 2 0 0 1 2 -2h12a2 2 0 0 1 2 2v.4a2 2 0 0 1 -.55 1.38l-5.45 5.72v5.5l-4 2v-7.5l-5.45 -5.72a2 2 0 0 1 -.55 -1.38z"/><path d="M4.4 7.8h15.2"/></svg>
<div class="t" style="left:2010.45px;top:927.00px;font:400 25px/25px 'Liberation Mono', monospace;color:#4a4a4a;letter-spacing:-0.302px;-webkit-text-stroke:0.35px #4a4a4a;">771c2417-ce4b-43d3-932f-c308a8660c42</div>
<div style="left:1980px;top:970px;width:1282px;height:2px;background:#dedede;"></div>
<div class="t" style="left:2012.09px;top:993.00px;font:400 24.3px/25px 'Liberation Sans', sans-serif;color:#2b2b2b;transform:scaleX(1.1126);-webkit-text-stroke:0.8px #2b2b2b;">service.instance.id</div>
<svg style="left:3159.92px;top:987.13px" width="34" height="32" viewBox="0 0 24 24" preserveAspectRatio="none" fill="none" stroke="#969592" stroke-width="1.9" stroke-linecap="round" stroke-linejoin="round"><path d="M15 3v4a1 1 0 0 0 1 1h4"/><path d="M18 17h-7a2 2 0 0 1 -2 -2v-10a2 2 0 0 1 2 -2h4l5 5v7a2 2 0 0 1 -2 2z"/><path d="M16 17v2a2 2 0 0 1 -2 2h-7a2 2 0 0 1 -2 -2v-10a2 2 0 0 1 2 -2h2"/></svg>
<svg style="left:3199.92px;top:985.66px" width="35" height="33" viewBox="0 0 24 24" preserveAspectRatio="none" fill="none" stroke="#ff9e8e" stroke-width="1.85" stroke-linecap="round" stroke-linejoin="round"><path d="M4 6a2 2 0 0 1 2 -2h12a2 2 0 0 1 2 2v.4a2 2 0 0 1 -.55 1.38l-5.45 5.72v5.5l-4 2v-7.5l-5.45 -5.72a2 2 0 0 1 -.55 -1.38z"/><path d="M4.4 7.8h15.2"/></svg>
<div class="t" style="left:2010.45px;top:1037.00px;font:400 25px/25px 'Liberation Mono', monospace;color:#4a4a4a;letter-spacing:-0.302px;-webkit-text-stroke:0.35px #4a4a4a;">771c2417-ce4b-43d3-932f-c308a8660c42</div>
<div style="left:1980px;top:1080px;width:1282px;height:2px;background:#dedede;"></div>
<div class="t" style="left:2012.10px;top:1103.00px;font:400 24.3px/25px 'Liberation Sans', sans-serif;color:#2b2b2b;transform:scaleX(1.0909);-webkit-text-stroke:0.8px #2b2b2b;">service.name</div>
<svg style="left:3159.92px;top:1097.13px" width="34" height="32" viewBox="0 0 24 24" preserveAspectRatio="none" fill="none" stroke="#969592" stroke-width="1.9" stroke-linecap="round" stroke-linejoin="round"><path d="M15 3v4a1 1 0 0 0 1 1h4"/><path d="M18 17h-7a2 2 0 0 1 -2 -2v-10a2 2 0 0 1 2 -2h4l5 5v7a2 2 0 0 1 -2 2z"/><path d="M16 17v2a2 2 0 0 1 -2 2h-7a2 2 0 0 1 -2 -2v-10a2 2 0 0 1 2 -2h2"/></svg>
<svg style="left:3199.92px;top:1095.66px" width="35" height="33" viewBox="0 0 24 24" preserveAspectRatio="none" fill="none" stroke="#ff9e8e" stroke-width="1.85" stroke-linecap="round" stroke-linejoin="round"><path d="M4 6a2 2 0 0 1 2 -2h12a2 2 0 0 1 2 2v.4a2 2 0 0 1 -.55 1.38l-5.45 5.72v5.5l-4 2v-7.5l-5.45 -5.72a2 2 0 0 1 -.55 -1.38z"/><path d="M4.4 7.8h15.2"/></svg>
<div class="t" style="left:2009.12px;top:1147.00px;font:400 25px/25px 'Liberation Mono', monospace;color:#4a4a4a;letter-spacing:-0.302px;-webkit-text-stroke:0.35px #4a4a4a;">load-generator</div>
<div style="left:1980px;top:1190px;width:1282px;height:2px;background:#dedede;"></div>
<div class="t" style="left:2012.10px;top:1213.00px;font:400 24.3px/25px 'Liberation Sans', sans-serif;color:#2b2b2b;transform:scaleX(1.0931);-webkit-text-stroke:0.8px #2b2b2b;">service.namespace</div>
<svg style="left:3159.92px;top:1207.13px" width="34" height="32" viewBox="0 0 24 24" preserveAspectRatio="none" fill="none" stroke="#969592" stroke-width="1.9" stroke-linecap="round" stroke-linejoin="round"><path d="M15 3v4a1 1 0 0 0 1 1h4"/><path d="M18 17h-7a2 2 0 0 1 -2 -2v-10a2 2 0 0 1 2 -2h4l5 5v7a2 2 0 0 1 -2 2z"/><path d="M16 17v2a2 2 0 0 1 -2 2h-7a2 2 0 0 1 -2 -2v-10a2 2 0 0 1 2 -2h2"/></svg>
<svg style="left:3199.92px;top:1205.66px" width="35" height="33" viewBox="0 0 24 24" preserveAspectRatio="none" fill="none" stroke="#ff9e8e" stroke-width="1.85" stroke-linecap="round" stroke-linejoin="round"><path d="M4 6a2 2 0 0 1 2 -2h12a2 2 0 0 1 2 2v.4a2 2 0 0 1 -.55 1.38l-5.45 5.72v5.5l-4 2v-7.5l-5.45 -5.72a2 2 0 0 1 -.55 -1.38z"/><path d="M4.4 7.8h15.2"/></svg>
<div class="t" style="left:2010.79px;top:1257.00px;font:400 25px/25px 'Liberation Mono', monospace;color:#4a4a4a;letter-spacing:-0.302px;-webkit-text-stroke:0.35px #4a4a4a;">opentelemetry-demo</div>
<div style="left:1980px;top:1300px;width:1282px;height:2px;background:#dedede;"></div>
<div class="t" style="left:2012.09px;top:1323.00px;font:400 24.3px/25px 'Liberation Sans', sans-serif;color:#2b2b2b;transform:scaleX(1.1083);-webkit-text-stroke:0.8px #2b2b2b;">service.version</div>
<svg style="left:3159.92px;top:1317.13px" width="34" height="32" viewBox="0 0 24 24" preserveAspectRatio="none" fill="none" stroke="#969592" stroke-width="1.9" stroke-linecap="round" stroke-linejoin="round"><path d="M15 3v4a1 1 0 0 0 1 1h4"/><path d="M18 17h-7a2 2 0 0 1 -2 -2v-10a2 2 0 0 1 2 -2h4l5 5v7a2 2 0 0 1 -2 2z"/><path d="M16 17v2a2 2 0 0 1 -2 2h-7a2 2 0 0 1 -2 -2v-10a2 2 0 0 1 2 -2h2"/></svg>
<svg style="left:3199.92px;top:1315.66px" width="35" height="33" viewBox="0 0 24 24" preserveAspectRatio="none" fill="none" stroke="#ff9e8e" stroke-width="1.85" stroke-linecap="round" stroke-linejoin="round"><path d="M4 6a2 2 0 0 1 2 -2h12a2 2 0 0 1 2 2v.4a2 2 0 0 1 -.55 1.38l-5.45 5.72v5.5l-4 2v-7.5l-5.45 -5.72a2 2 0 0 1 -.55 -1.38z"/><path d="M4.4 7.8h15.2"/></svg>
<div class="t" style="left:2010.62px;top:1367.00px;font:400 25px/25px 'Liberation Mono', monospace;color:#4a4a4a;letter-spacing:-0.302px;-webkit-text-stroke:0.35px #4a4a4a;">2.0.2</div>
<div style="left:1980px;top:1410px;width:1282px;height:2px;background:#dedede;"></div>
<div class="t" style="left:2012.44px;top:1433.00px;font:400 24.3px/25px 'Liberation Sans', sans-serif;color:#2b2b2b;transform:scaleX(1.0934);-webkit-text-stroke:0.8px #2b2b2b;">telemetry.sdk.language</div>
<svg style="left:3159.92px;top:1427.13px" width="34" height="32" viewBox="0 0 24 24" preserveAspectRatio="none" fill="none" stroke="#969592" stroke-width="1.9" stroke-linecap="round" stroke-linejoin="round"><path d="M15 3v4a1 1 0 0 0 1 1h4"/><path d="M18 17h-7a2 2 0 0 1 -2 -2v-10a2 2 0 0 1 2 -2h4l5 5v7a2 2 0 0 1 -2 2z"/><path d="M16 17v2a2 2 0 0 1 -2 2h-7a2 2 0 0 1 -2 -2v-10a2 2 0 0 1 2 -2h2"/></svg>
<svg style="left:3199.92px;top:1425.66px" width="35" height="33" viewBox="0 0 24 24" preserveAspectRatio="none" fill="none" stroke="#ff9e8e" stroke-width="1.85" stroke-linecap="round" stroke-linejoin="round"><path d="M4 6a2 2 0 0 1 2 -2h12a2 2 0 0 1 2 2v.4a2 2 0 0 1 -.55 1.38l-5.45 5.72v5.5l-4 2v-7.5l-5.45 -5.72a2 2 0 0 1 -.55 -1.38z"/><path d="M4.4 7.8h15.2"/></svg>
<div class="t" style="left:2010.19px;top:1477.00px;font:400 25px/25px 'Liberation Mono', monospace;color:#4a4a4a;letter-spacing:-0.302px;-webkit-text-stroke:0.35px #4a4a4a;">python</div>
<div style="left:1980px;top:1520px;width:1282px;height:2px;background:#dedede;"></div>
<div class="t" style="left:2012.44px;top:1543.00px;font:400 24.3px/25px 'Liberation Sans', sans-serif;color:#2b2b2b;transform:scaleX(1.0900);-webkit-text-stroke:0.8px #2b2b2b;">telemetry.sdk.name</div>
<svg style="left:3159.92px;top:1537.13px" width="34" height="32" viewBox="0 0 24 24" preserveAspectRatio="none" fill="none" stroke="#969592" stroke-width="1.9" stroke-linecap="round" stroke-linejoin="round"><path d="M15 3v4a1 1 0 0 0 1 1h4"/><path d="M18 17h-7a2 2 0 0 1 -2 -2v-10a2 2 0 0 1 2 -2h4l5 5v7a2 2 0 0 1 -2 2z"/><path d="M16 17v2a2 2 0 0 1 -2 2h-7a2 2 0 0 1 -2 -2v-10a2 2 0 0 1 2 -2h2"/></svg>
<svg style="left:3199.92px;top:1535.66px" width="35" height="33" viewBox="0 0 24 24" preserveAspectRatio="none" fill="none" stroke="#ff9e8e" stroke-width="1.85" stroke-linecap="round" stroke-linejoin="round"><path d="M4 6a2 2 0 0 1 2 -2h12a2 2 0 0 1 2 2v.4a2 2 0 0 1 -.55 1.38l-5.45 5.72v5.5l-4 2v-7.5l-5.45 -5.72a2 2 0 0 1 -.55 -1.38z"/><path d="M4.4 7.8h15.2"/></svg>
<div class="t" style="left:2010.79px;top:1587.00px;font:400 25px/25px 'Liberation Mono', monospace;color:#4a4a4a;letter-spacing:-0.302px;-webkit-text-stroke:0.35px #4a4a4a;">opentelemetry</div>
<div style="left:1980px;top:1630px;width:1282px;height:2px;background:#dedede;"></div>
<div class="t" style="left:2012.44px;top:1653.00px;font:400 24.3px/25px 'Liberation Sans', sans-serif;color:#2b2b2b;transform:scaleX(1.1032);-webkit-text-stroke:0.8px #2b2b2b;">telemetry.sdk.version</div>
<svg style="left:3159.92px;top:1647.13px" width="34" height="32" viewBox="0 0 24 24" preserveAspectRatio="none" fill="none" stroke="#969592" stroke-width="1.9" stroke-linecap="round" stroke-linejoin="round"><path d="M15 3v4a1 1 0 0 0 1 1h4"/><path d="M18 17h-7a2 2 0 0 1 -2 -2v-10a2 2 0 0 1 2 -2h4l5 5v7a2 2 0 0 1 -2 2z"/><path d="M16 17v2a2 2 0 0 1 -2 2h-7a2 2 0 0 1 -2 -2v-10a2 2 0 0 1 2 -2h2"/></svg>
<svg style="left:3199.92px;top:1645.66px" width="35" height="33" viewBox="0 0 24 24" preserveAspectRatio="none" fill="none" stroke="#ff9e8e" stroke-width="1.85" stroke-linecap="round" stroke-linejoin="round"><path d="M4 6a2 2 0 0 1 2 -2h12a2 2 0 0 1 2 2v.4a2 2 0 0 1 -.55 1.38l-5.45 5.72v5.5l-4 2v-7.5l-5.45 -5.72a2 2 0 0 1 -.55 -1.38z"/><path d="M4.4 7.8h15.2"/></svg>
<div class="t" style="left:2010.57px;top:1697.00px;font:400 25px/25px 'Liberation Mono', monospace;color:#4a4a4a;letter-spacing:-0.302px;-webkit-text-stroke:0.35px #4a4a4a;">1.30.0</div>
<div style="left:1980px;top:1740px;width:1282px;height:2px;background:#dedede;"></div>
<div class="t" style="left:2011.65px;top:1763.00px;font:400 24.3px/25px 'Liberation Sans', sans-serif;color:#2b2b2b;transform:scaleX(1.0667);-webkit-text-stroke:0.8px #2b2b2b;">Service Name</div>
<svg style="left:3159.92px;top:1757.13px" width="34" height="32" viewBox="0 0 24 24" preserveAspectRatio="none" fill="none" stroke="#969592" stroke-width="1.9" stroke-linecap="round" stroke-linejoin="round"><path d="M15 3v4a1 1 0 0 0 1 1h4"/><path d="M18 17h-7a2 2 0 0 1 -2 -2v-10a2 2 0 0 1 2 -2h4l5 5v7a2 2 0 0 1 -2 2z"/><path d="M16 17v2a2 2 0 0 1 -2 2h-7a2 2 0 0 1 -2 -2v-10a2 2 0 0 1 2 -2h2"/></svg>
<svg style="left:3199.92px;top:1755.66px" width="35" height="33" viewBox="0 0 24 24" preserveAspectRatio="none" fill="none" stroke="#ff9e8e" stroke-width="1.85" stroke-linecap="round" stroke-linejoin="round"><path d="M4 6a2 2 0 0 1 2 -2h12a2 2 0 0 1 2 2v.4a2 2 0 0 1 -.55 1.38l-5.45 5.72v5.5l-4 2v-7.5l-5.45 -5.72a2 2 0 0 1 -.55 -1.38z"/><path d="M4.4 7.8h15.2"/></svg>
<div class="t" style="left:2009.12px;top:1807.00px;font:400 25px/25px 'Liberation Mono', monospace;color:#4a4a4a;letter-spacing:-0.302px;-webkit-text-stroke:0.35px #4a4a4a;">load-generator</div>
</body></html>
